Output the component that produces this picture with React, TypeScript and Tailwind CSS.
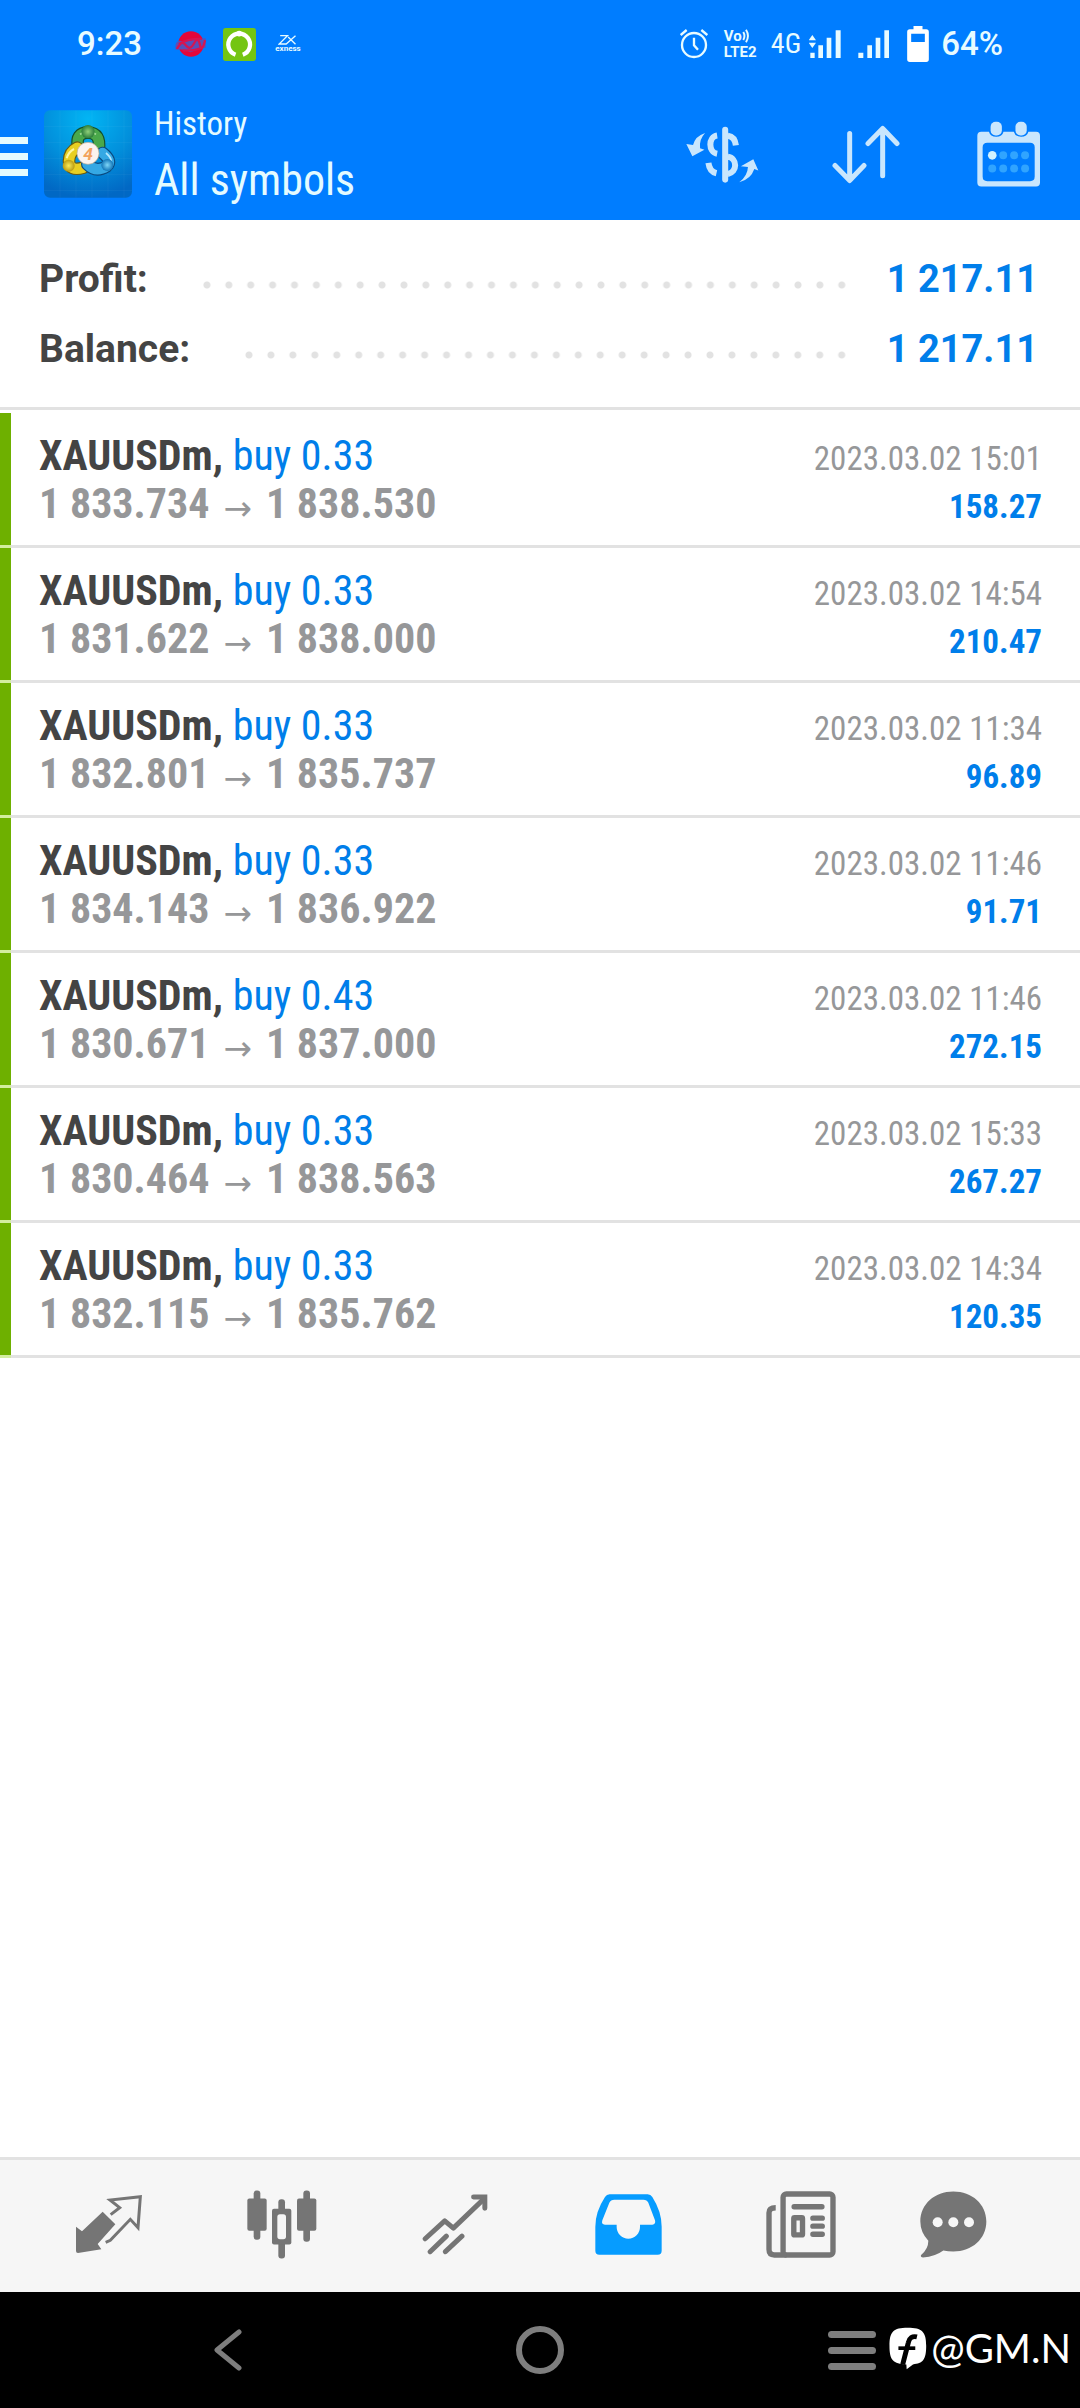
import type { ReactNode } from "react";

type Deal = {
    side: string;
    open: string;
    close: string;
    time: string;
    profit: string;
};

const SYMBOL = "XAUUSDm";

const deals: Deal[] = [
    { side: "buy 0.33", open: "1 833.734", close: "1 838.530", time: "2023.03.02 15:01", profit: "158.27" },
    { side: "buy 0.33", open: "1 831.622", close: "1 838.000", time: "2023.03.02 14:54", profit: "210.47" },
    { side: "buy 0.33", open: "1 832.801", close: "1 835.737", time: "2023.03.02 11:34", profit: "96.89" },
    { side: "buy 0.33", open: "1 834.143", close: "1 836.922", time: "2023.03.02 11:46", profit: "91.71" },
    { side: "buy 0.43", open: "1 830.671", close: "1 837.000", time: "2023.03.02 11:46", profit: "272.15" },
    { side: "buy 0.33", open: "1 830.464", close: "1 838.563", time: "2023.03.02 15:33", profit: "267.27" },
    { side: "buy 0.33", open: "1 832.115", close: "1 835.762", time: "2023.03.02 14:34", profit: "120.35" }
];

const summary = [
    { label: "Profit:", value: "1 217.11" },
    { label: "Balance:", value: "1 217.11" }
];

const StatusBar = () => (
    <div className="flex h-22 items-center justify-between px-[77px] font-['Roboto',sans-serif] text-[33px] font-medium text-[#e8fbff]">
        <div className="flex items-center">
            <span>9:23</span>
            <svg viewBox="528 92 100 84" className="ml-[33px] h-7 w-8">
                <ellipse cx="578" cy="134" rx="40" ry="40" fill="#e4063a" />
                <path d="M530 152Q526 130 540 124Q566 128 590 120L624 116L624 146Q600 150 576 160Q552 146 530 152Z" fill="#5a50b8" />
                <path d="M534 150Q548 122 558 134T574 146T590 128T606 136T622 122M540 134Q570 116 612 118M552 154Q590 156 614 144" fill="none" stroke="#d81450" strokeWidth="7" />
            </svg>
            <svg viewBox="674 83 100 100" className="ml-4 h-[33px] w-[33px]">
                <rect x="674" y="83" width="100" height="100" rx="8" fill="#74c512" />
                <path d="M712 164A33 33 0 1 1 734 164" fill="none" stroke="#fff" strokeWidth="13" />
                <circle cx="723" cy="100" r="9" fill="#fff" />
            </svg>
            <div className="ml-5 flex w-6 flex-col items-center">
                <svg viewBox="842 108 56 30" className="h-[10px] w-[19px]">
                    <path d="M848 110H870L845 135H866L894 110M872 114L894 136" fill="none" stroke="currentColor" strokeWidth="4" />
                </svg>
                <span className="text-[8px] leading-[8px] font-bold">exness</span>
            </div>
        </div>
        <div className="flex items-center">
            <svg viewBox="62 86 84 90" className="h-[30px] w-7" fill="none" stroke="currentColor" strokeWidth="7">
                <circle cx="104" cy="134" r="36" />
                <path d="M104 112V135L116 148M64 104L82 89M144 104L126 89" />
            </svg>
            <div className="ml-4 flex w-[37px] flex-col">
                <span className="flex items-center text-[15px] leading-4 font-bold">
                    Vo
                    <svg viewBox="0 0 18 36" className="h-[14px] w-2" fill="none" stroke="currentColor" strokeWidth="5">
                        <path d="M2 8Q8 18 2 28M9 2Q19 18 9 34" />
                    </svg>
                </span>
                <span className="text-[15px] leading-4 font-bold">LTE2</span>
            </div>
            <span className="ml-[10px] font-['Roboto_Condensed','Liberation_Sans_Narrow',sans-serif] text-[28px] font-normal">4G</span>
            <svg viewBox="452 88 96 84" className="ml-2 h-7 w-8" fill="currentColor">
                <path d="M462 103L473 119H451ZM462 142L473 126H451ZM456 156H469V172H456ZM480 134H494V172H480ZM505 111H519V172H505ZM532 89H547V172H532Z" />
            </svg>
            <svg viewBox="599 88 96 84" className="ml-[17px] h-7 w-8" fill="currentColor">
                <path d="M600 156H615V172H600ZM627 134H641V172H627ZM652 111H666V172H652ZM678 89H692V172H678Z" />
            </svg>
            <svg viewBox="746 78 65 108" className="ml-[17px] h-9 w-[22px]">
                <path d="M765 78H792V88H803Q811 88 811 96V178Q811 186 803 186H754Q746 186 746 178V96Q746 88 754 88H765ZM758 101V126H799V101Z" fill="#fff" fillRule="evenodd" />
            </svg>
            <span className="ml-3">64%</span>
        </div>
    </div>
);

const AppLogo = () => (
    <svg viewBox="132 332 264 262" className="ml-4 h-22 w-22">
        <defs>
            <radialGradient id="logoBg" cx="50%" cy="10%" r="90%">
                <stop offset="0" stopColor="#02b5f4" />
                <stop offset="0.55" stopColor="#0290dc" />
                <stop offset="1" stopColor="#0168c4" />
            </radialGradient>
            <radialGradient id="logoGreen">
                <stop offset="0" stopColor="#8fd07a" />
                <stop offset="1" stopColor="#2c7d3a" />
            </radialGradient>
            <radialGradient id="logoYellow">
                <stop offset="0" stopColor="#f8ec5c" />
                <stop offset="1" stopColor="#b99a12" />
            </radialGradient>
            <radialGradient id="logoCyan">
                <stop offset="0" stopColor="#7fd6f8" />
                <stop offset="1" stopColor="#1276b8" />
            </radialGradient>
        </defs>
        <rect x="132" y="332" width="264" height="262" rx="18" fill="url(#logoBg)" />
        <path d="M180 332V594M228 332V594M276 332V594M324 332V594M372 332V594M132 380H396M132 428H396M132 476H396M132 524H396M132 572H396" stroke="#fff" strokeOpacity="0.07" strokeWidth="2" />
        <g fill="none" strokeLinecap="round">
            <path d="M234 440Q226 400 264 398Q304 400 296 450" stroke="#14502c" strokeWidth="38" />
            <path d="M234 440Q226 400 264 398Q304 400 296 450" stroke="#4aa84a" strokeWidth="31" />
            <path d="M250 504Q208 516 207 484Q208 456 232 444" stroke="#6b5a10" strokeWidth="38" />
            <path d="M250 504Q208 516 207 484Q208 456 232 444" stroke="#e8cf22" strokeWidth="31" />
            <path d="M308 460Q338 484 320 500Q288 520 262 494" stroke="#0b4a80" strokeWidth="38" />
            <path d="M308 460Q338 484 320 500Q288 520 262 494" stroke="#35a8e4" strokeWidth="31" />
        </g>
        <path d="M240 404Q264 386 288 404" fill="none" stroke="#a6e09a" strokeWidth="5" />
        <path d="M200 476Q206 456 222 448" fill="none" stroke="#fff6a0" strokeWidth="6" />
        <path d="M318 460Q334 474 334 486" fill="none" stroke="#b4e8ff" strokeWidth="5" />
        <circle cx="264" cy="396" r="20" fill="url(#logoGreen)" />
        <circle cx="206" cy="498" r="18" fill="url(#logoYellow)" />
        <circle cx="322" cy="496" r="18" fill="url(#logoCyan)" />
        <circle cx="264" cy="461" r="33" fill="#fbf3ee" stroke="#b8a890" strokeWidth="2" />
        <text x="264" y="480" textAnchor="middle" fontFamily="Roboto, sans-serif" fontStyle="italic" fontWeight="700" fontSize="52" fill="#f2a25c">4</text>
    </svg>
);

const HeaderButton = ({ label, children }: { label: string; children: ReactNode }) => (
    <button aria-label={label} className="flex h-full w-[143px] items-center justify-center text-[#c9e6fd]">
        {children}
    </button>
);

const Toolbar = () => (
    <div className="flex h-33 items-center text-[#e4fbff]">
        <button aria-label="Menu" className="flex h-full w-7 flex-col justify-center gap-[9px] pt-1">
            <span className="h-[7px] bg-current" />
            <span className="h-[7px] bg-current" />
            <span className="h-[7px] bg-current" />
        </button>
        <AppLogo />
        <div className="ml-[22px] flex-1 font-['Roboto_Condensed','Liberation_Sans_Narrow',sans-serif]">
            <p className="text-[33px] leading-[52px]">History</p>
            <h1 className="text-[44px] leading-[60px]">All symbols</h1>
        </div>
        <HeaderButton label="Symbol filter">
            <svg viewBox="78 372 218 170" className="h-[57px] w-[73px]" fill="none" stroke="currentColor" strokeWidth="18">
                <path d="M195 383V532" strokeLinecap="round" />
                <path d="M171 400C144 404 144 450 171 455M145 482Q148 508 169 513M203 401Q224 404 227 430M203 464C232 468 232 510 203 515" />
                <path d="M135 393Q106 402 99 429L79 426L97 462L133 443L120 438Q117 412 135 393ZM237 540Q262 520 263 494L242 492L279 471L294 505L282 500Q272 530 237 540Z" fill="currentColor" stroke="none" />
            </svg>
        </HeaderButton>
        <HeaderButton label="Sort">
            <svg viewBox="513 372 204 176" className="h-[59px] w-[68px]" fill="none" stroke="currentColor" strokeWidth="15" strokeLinecap="round" strokeLinejoin="round">
                <path d="M566 397V537M522 493L566 538L609 493M665 524V383M621 427L665 382L708 427" />
            </svg>
        </HeaderButton>
        <HeaderButton label="Period">
            <svg viewBox="950 358 190 198" className="h-[66px] w-[63px]">
                <path d="M963 390H986Q990 405 1008 405Q1026 405 1030 390H1061Q1065 405 1083 405Q1101 405 1105 390H1128Q1140 390 1140 402V543Q1140 555 1128 555H963Q951 555 951 543V402Q951 390 963 390ZM981 423Q967 423 967 437V525Q967 539 981 539H1110Q1124 539 1124 525V437Q1124 423 1110 423Z" fill="currentColor" fillRule="evenodd" />
                <rect x="991" y="360" width="34" height="41" rx="15" fill="currentColor" />
                <rect x="1066" y="360" width="34" height="41" rx="15" fill="currentColor" />
                <g fill="#30a4ff">
                    <circle cx="996" cy="461" r="13" fill="#d3f3ff" />
                    <circle cx="1029" cy="461" r="12" />
                    <circle cx="1062" cy="461" r="12" />
                    <circle cx="1095" cy="461" r="12" />
                    <circle cx="996" cy="501" r="12" />
                    <circle cx="1029" cy="501" r="12" />
                    <circle cx="1062" cy="501" r="12" />
                    <circle cx="1095" cy="501" r="12" />
                </g>
            </svg>
        </HeaderButton>
    </div>
);

const DealRow = ({ deal }: { deal: Deal }) => (
    <li>
        <div className="flex h-33 bg-white font-['Roboto_Condensed','Liberation_Sans_Narrow',sans-serif]">
            <div className="w-[11px] bg-[#6eb000]" />
            <div className="flex flex-1 justify-between pt-[19px] pr-[38px] pl-7">
                <div className="text-[42px] leading-[48px]">
                    <p>
                        <span className="font-bold text-[#444444]">{SYMBOL}, </span>
                        <span className="text-[#007eea]">{deal.side}</span>
                    </p>
                    <p className="flex items-center font-bold text-[#969799]">
                        {deal.open}
                        <span className="mx-[14px] pt-2 font-['DejaVu_Sans',sans-serif] text-[34px] leading-[40px] font-normal">→</span>
                        {deal.close}
                    </p>
                </div>
                <div className="pt-[3px] text-right text-[33px] leading-[48px]">
                    <p className="text-[#969799]">{deal.time}</p>
                    <p className="font-bold text-[#007eea]">{deal.profit}</p>
                </div>
            </div>
        </div>
        <div className="flex h-[3px] bg-[#e2e2e2]">
            <div className="w-[11px] bg-[#d3eda0]" />
        </div>
    </li>
);

const TabBar = () => (
    <nav className="grid h-[135px] grid-cols-[4fr_4fr_4fr_4fr_4fr_3fr] border-t-[3px] border-[#e2e2e2] bg-[#f6f6f6] pr-[62px] pb-1 pl-[22px] text-[#757575]">
        <button aria-label="Quotes" className="flex items-center justify-center">
            <svg viewBox="104 132 204 180" className="h-15 w-[68px]">
                <path d="M187 185L225 223L172 282L183 298L113 309Q107 309 107 303V230L125 244Z" fill="currentColor" />
                <path d="M211 194L238 173L209 150L300 140L293 233L270 208L210 271L196 277" fill="none" stroke="currentColor" strokeWidth="9" />
            </svg>
        </button>
        <button aria-label="Charts" className="flex items-center justify-center">
            <svg viewBox="619 119 210 206" className="h-[69px] w-[70px]">
                <g fill="currentColor">
                    <rect x="639" y="120" width="20" height="148" rx="9" />
                    <rect x="620" y="144" width="58" height="97" rx="6" />
                    <rect x="713" y="146" width="20" height="178" rx="9" />
                    <rect x="694" y="175" width="58" height="107" rx="6" />
                    <rect x="788" y="120" width="20" height="154" rx="9" />
                    <rect x="769" y="144" width="58" height="97" rx="6" />
                </g>
                <rect x="710" y="191" width="26" height="75" rx="8" fill="#f6f6f6" />
            </svg>
        </button>
        <button aria-label="Trade" className="flex items-center justify-center">
            <svg viewBox="93 127 198 184" className="h-[61px] w-[66px]" fill="none" stroke="currentColor" strokeWidth="15">
                <path d="M102 262L161 208L187 230L277 144" strokeLinecap="round" strokeLinejoin="round" />
                <path d="M248 136H282V170" strokeLinecap="round" />
                <path d="M117 301L166 254M163 301L213 254" strokeLinecap="round" />
            </svg>
        </button>
        <button aria-label="History" aria-current="page" className="flex items-center justify-center text-[#069cff]">
            <svg viewBox="612 127 201 183" className="h-[61px] w-[67px]">
                <path d="M656 128H770Q779 128 784 136Q812 180 812 225V297Q812 309 800 309H625Q613 309 613 297V225Q613 180 642 136Q647 128 656 128ZM670 144Q659 144 655 153L634 206Q630 219 642 219H677V226A35 35 0 0 0 747 226V219H784Q795 218 792 206L772 153Q768 144 757 144Z" fill="currentColor" fillRule="evenodd" />
            </svg>
        </button>
        <button aria-label="News" className="flex items-center justify-center">
            <svg viewBox="109 119 209 200" className="h-[67px] w-[70px]" fill="none" stroke="currentColor" strokeWidth="16">
                <rect x="160" y="128" width="149" height="182" rx="10" />
                <path d="M138 169Q118 169 118 184V294Q118 310 134 310H170" />
                <path d="M193 166H276M249 200H277M249 224H277M249 248H277" strokeLinecap="round" />
                <rect x="192" y="199" width="26" height="51" rx="2" />
            </svg>
        </button>
        <button aria-label="Messages" className="flex items-center justify-center">
            <svg viewBox="569 119 201 200" className="h-[67px] w-[67px]">
                <path d="M669 120C725 120 768 158 768 210S725 300 669 300Q653 300 639 297Q615 315 578 318Q568 316 573 310Q594 292 594 268Q570 242 570 210C570 158 613 120 669 120Z" fill="currentColor" />
                <circle cx="622" cy="212" r="15" fill="#f6f6f6" />
                <circle cx="669" cy="212" r="15" fill="#f6f6f6" />
                <circle cx="716" cy="212" r="15" fill="#f6f6f6" />
            </svg>
        </button>
    </nav>
);

const SystemNav = () => (
    <div className="relative flex h-29 items-center justify-between bg-black px-[204px] text-[#7e7e7e]">
        <button aria-label="Back" className="flex w-12 justify-center">
            <svg viewBox="0 0 28 44" className="h-11 w-7" fill="none" stroke="currentColor" strokeWidth="5" strokeLinecap="round" strokeLinejoin="round">
                <path d="M25 4L3 22L25 40" />
            </svg>
        </button>
        <button aria-label="Home" className="h-12 w-12 rounded-full border-[6px] border-current" />
        <button aria-label="Recent apps" className="flex w-12 flex-col gap-[9px]">
            <span className="h-[7px] rounded-full bg-current" />
            <span className="h-[7px] rounded-full bg-current" />
            <span className="h-[7px] rounded-full bg-current" />
        </button>
        <div className="absolute inset-y-0 right-[9px] flex items-center gap-1 pb-1 text-white">
            <svg viewBox="336 119 114 130" className="h-[43px] w-[38px]">
                <path d="M392 121C436 121 448 133 448 176C448 218 438 230 408 232L389 247L388 232C348 231 337 220 337 176C337 133 348 121 392 121Z" fill="#fff" />
                <path d="M420 149Q399 144 394 166L377 232" fill="none" stroke="#000" strokeWidth="15" />
                <path d="M364 183H415" stroke="#000" strokeWidth="11" />
            </svg>
            <span className="font-['Lato',sans-serif] text-[40px] leading-[48px]">@GM.N</span>
        </div>
    </div>
);

export default function App() {
    return (
        <div className="flex min-h-screen flex-col bg-white">
            <header className="bg-[#007dff]">
                <StatusBar />
                <Toolbar />
            </header>

            <main className="flex-1">
                <dl className="mb-[3px] border-b-[3px] border-[#e2e2e2] pt-6 pr-[42px] pb-[23px] pl-[39px] font-['Roboto',sans-serif] text-[38px] leading-[70px] font-bold">
                    {summary.map((item) => (
                        <div key={item.label} className="flex items-center">
                            <dt className="text-[39px] text-[#444444]">{item.label}</dt>
                            <div className="mt-3 mr-[34px] ml-12 h-2 flex-1 bg-[radial-gradient(circle,#e2e2e2_3px,transparent_4px)] bg-[length:22px_8px] bg-repeat-round" />
                            <dd className="text-[#007eea]">{item.value}</dd>
                        </div>
                    ))}
                </dl>

                <ul>
                    {deals.map((deal, index) => (
                        <DealRow key={index} deal={deal} />
                    ))}
                </ul>
            </main>

            <TabBar />
            <SystemNav />
        </div>
    );
}
